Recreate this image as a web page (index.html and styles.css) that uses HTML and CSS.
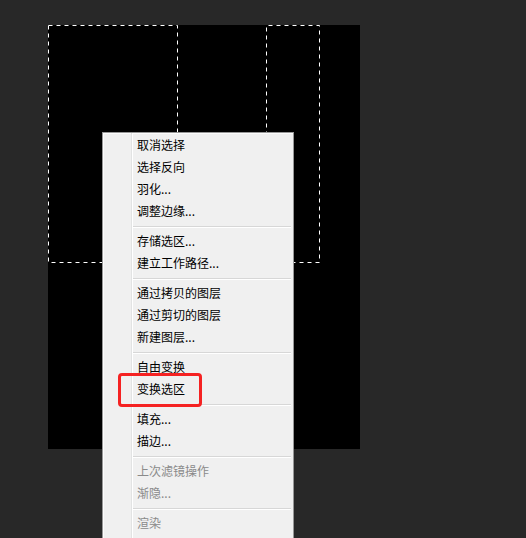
FILE: index.html
```html
<!DOCTYPE html>
<html lang="zh-CN">
<head>
  <meta charset="UTF-8">
  <title>变换选区</title>
<link rel="stylesheet" href="styles.css">
</head>
<body>
  <div class="workspace">
    <div class="canvas">
      <svg class="selection" width="312" height="424" viewBox="0 0 312 424">
        <path d="M0.5 0.5 H129.5 V110.5 H218.5 V0.5 H271.5 V237.5 H0.5 Z" />
      </svg>
    </div>
  </div>

  <ul class="context-menu">
    <li>取消选择</li>
    <li>选择反向</li>
    <li>羽化...</li>
    <li>调整边缘...</li>
    <li class="sep"></li>
    <li>存储选区...</li>
    <li>建立工作路径...</li>
    <li class="sep"></li>
    <li>通过拷贝的图层</li>
    <li>通过剪切的图层</li>
    <li>新建图层...</li>
    <li class="sep"></li>
    <li>自由变换</li>
    <li>变换选区</li>
    <li class="sep"></li>
    <li>填充...</li>
    <li>描边...</li>
    <li class="sep"></li>
    <li class="disabled">上次滤镜操作</li>
    <li class="disabled">渐隐...</li>
    <li class="sep"></li>
    <li class="disabled">渲染</li>
  </ul>

  <div class="highlight"></div>
</body>
</html>
```

FILE: styles.css
```css
html, body {
  margin: 0;
  height: 100%;
}
body {
  background-color: #282828;
  font-family: "Noto Sans CJK SC", "Microsoft YaHei", sans-serif;
  font-size: 12px;
  color: #000;
  overflow: hidden;
  position: relative;
}
.workspace {
  padding: 25px 0 0 48px;
}
.canvas {
  position: relative;
  width: 312px;
  height: 424px;
  background-color: #000;
}
.selection {
  position: absolute;
  left: 0;
  top: 0;
}
.selection path {
  fill: none;
  stroke: #fff;
  stroke-width: 1;
  stroke-dasharray: 4 4;
}
.context-menu {
  position: absolute;
  left: 102px;
  top: 132px;
  width: 190px;
  margin: 0;
  padding: 1px 0 30px;
  list-style: none;
  background-color: #f0f0f0;
  border: 1px solid #979797;
  box-shadow: inset 1px 1px 0 #fcfcfc;
}
.context-menu::before {
  content: "";
  position: absolute;
  top: 0;
  bottom: 0;
  left: 28px;
  width: 1px;
  background-color: #e2e3e3;
  border-right: 1px solid #fff;
}
.context-menu li {
  height: 22px;
  line-height: 22px;
  padding-left: 34px;
  white-space: nowrap;
}
.context-menu li.disabled {
  color: #8a8a8a;
}
.context-menu li.sep {
  height: 0;
  margin: 4px 2px 2px 30px;
  padding: 0;
  border-top: 1px solid #d7d7d7;
  border-bottom: 1px solid #fff;
}
.highlight {
  position: absolute;
  left: 118px;
  top: 373px;
  width: 78px;
  height: 28px;
  border: 3px solid #f52222;
  border-radius: 4px;
}
```
